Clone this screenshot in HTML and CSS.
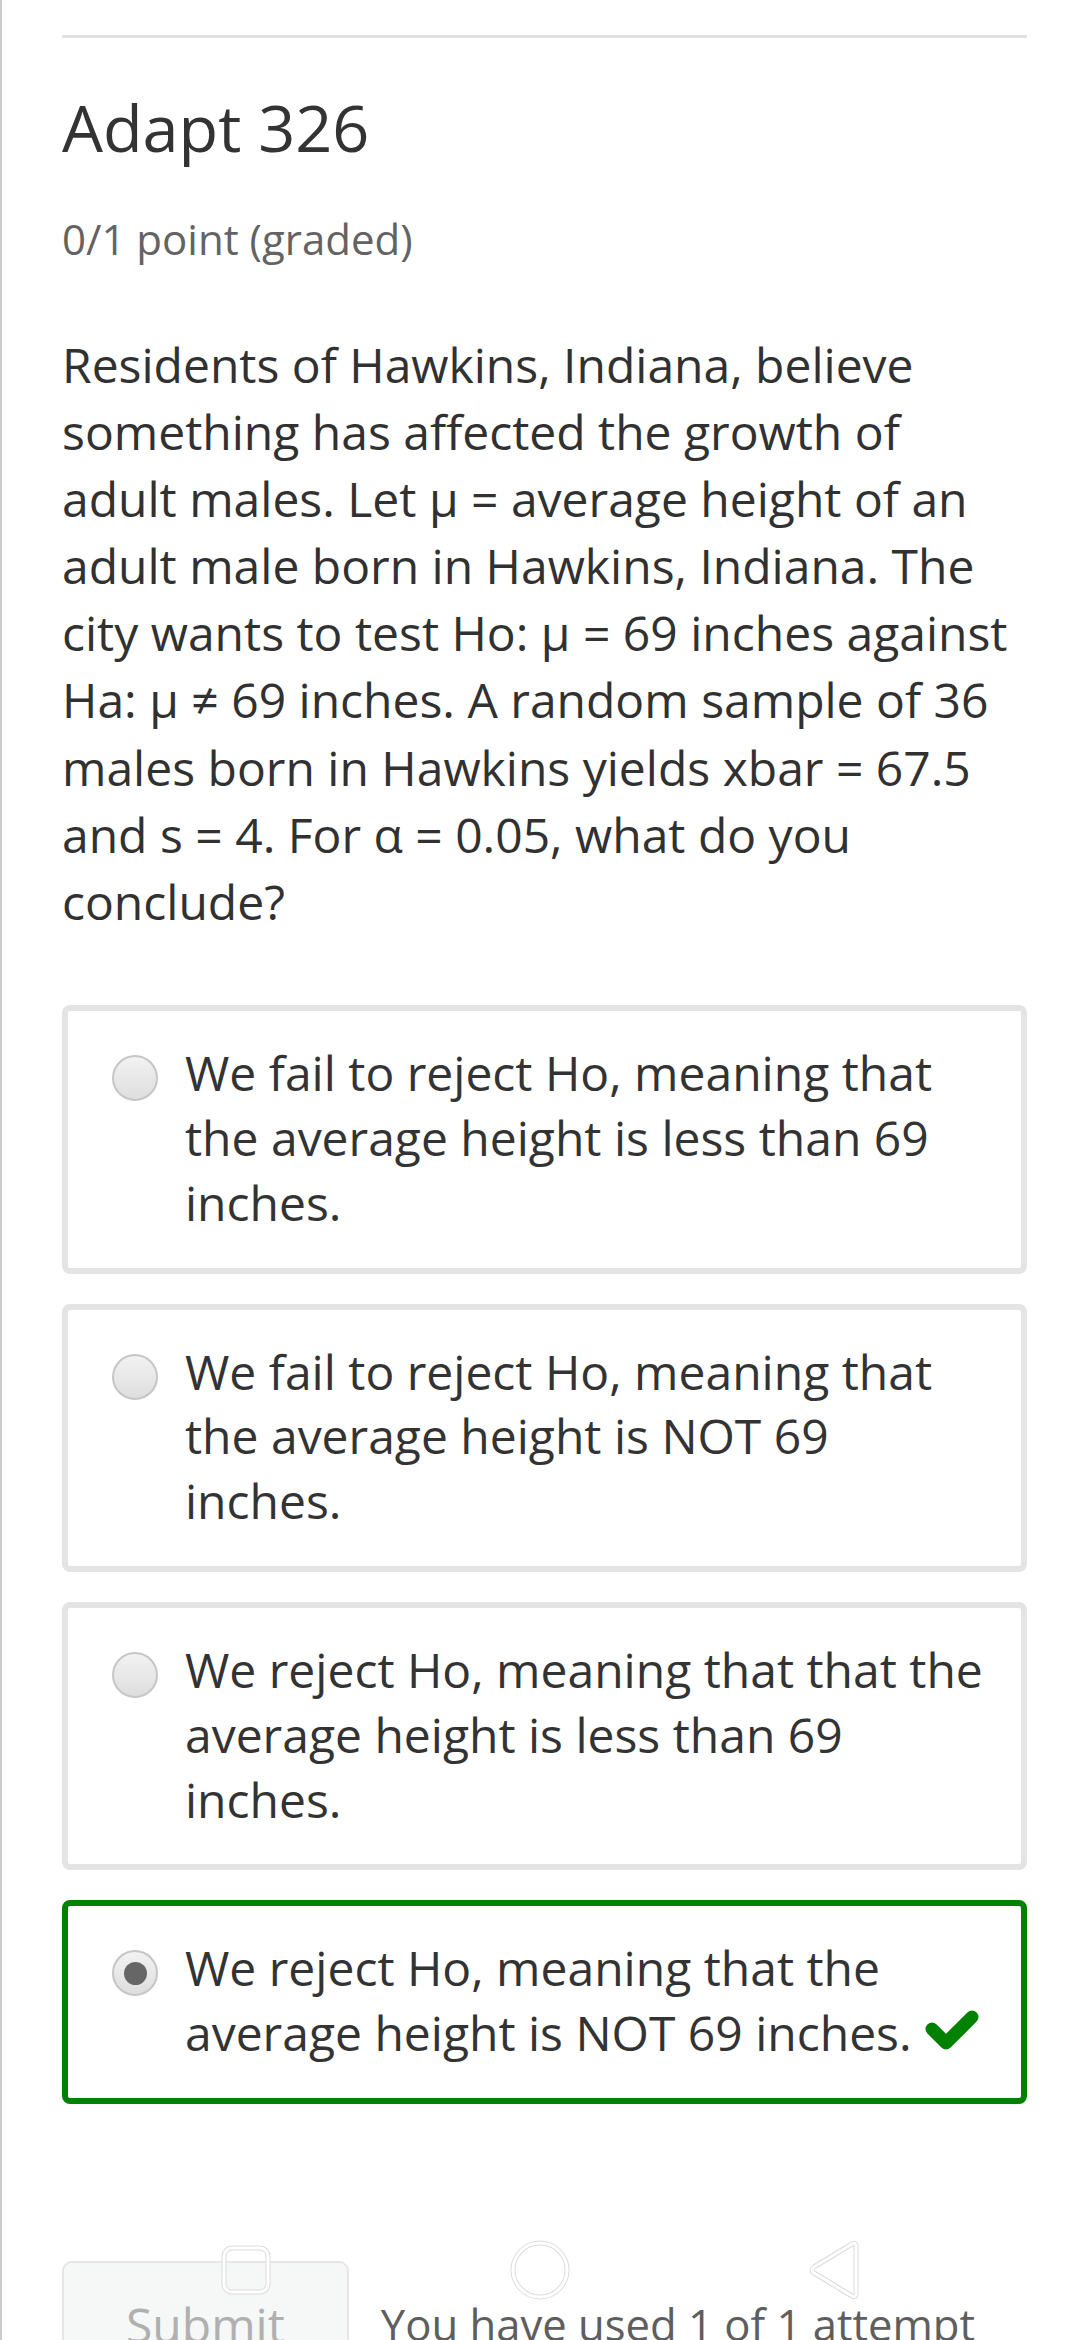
FILE: index.html
```html
<!DOCTYPE html>
<html lang="en">
<head>
<meta charset="utf-8">
<title>Adapt 326</title>
<link rel="stylesheet" href="styles.css">
</head>
<body>
<div class="page">
  <hr class="rule">
  <h2 class="title">Adapt 326</h2>
  <div class="points">0/1 point (graded)</div>
  <p class="question">Residents of Hawkins, Indiana, believe something has affected the growth of adult males. Let μ = average height of an adult male born in Hawkins, Indiana. The city wants to test Ho: μ = 69 inches against Ha: μ ≠ 69 inches. A random sample of 36 males born in Hawkins yields xbar = 67.5 and s = 4. For α = 0.05, what do you conclude?</p>
  <div class="choices">
    <label class="choice">
      <span class="radio"></span>
      <span class="choice-text">We fail to reject Ho, meaning that the average height is less than 69 inches.</span>
    </label>
    <label class="choice">
      <span class="radio"></span>
      <span class="choice-text">We fail to reject Ho, meaning that the average height is NOT 69 inches.</span>
    </label>
    <label class="choice">
      <span class="radio"></span>
      <span class="choice-text">We reject Ho, meaning that that the average height is less than 69 inches.</span>
    </label>
    <label class="choice correct">
      <span class="radio checked"></span>
      <span class="choice-text">We reject Ho, meaning that the average height is NOT 69 inches. <svg class="check" viewBox="0 0 56 46" width="56" height="46"><polyline points="8,20 22,34 48,8" fill="none" stroke="#008100" stroke-width="13" stroke-linecap="round" stroke-linejoin="round"/></svg></span>
    </label>
  </div>
  <div class="actions">
    <button class="submit" type="button">Submit</button>
    <span class="attempts">You have used 1 of 1 attempt</span>
  </div>
</div>
<div class="navbar">
  <svg class="nav-icon" width="60" height="60" viewBox="0 0 60 60">
    <rect x="8" y="8" width="44" height="44" rx="8" fill="none" stroke="#dcdcdc" stroke-width="5"/>
    <rect x="8" y="8" width="44" height="44" rx="8" fill="none" stroke="#ffffff" stroke-width="3"/>
  </svg>
  <svg class="nav-icon" width="66" height="66" viewBox="0 0 66 66">
    <circle cx="33" cy="33" r="27" fill="none" stroke="#dcdcdc" stroke-width="5"/>
    <circle cx="33" cy="33" r="27" fill="none" stroke="#ffffff" stroke-width="3"/>
  </svg>
  <svg class="nav-icon" width="60" height="62" viewBox="0 0 60 62">
    <path d="M50 7 L50 55 Q50 59 46 57 L8 34 Q4 31 8 28 L46 5 Q50 3 50 7 Z" fill="none" stroke="#dcdcdc" stroke-width="5" stroke-linejoin="round"/>
    <path d="M50 7 L50 55 Q50 59 46 57 L8 34 Q4 31 8 28 L46 5 Q50 3 50 7 Z" fill="none" stroke="#ffffff" stroke-width="3" stroke-linejoin="round"/>
  </svg>
</div>
</body>
</html>
```

FILE: styles.css
```css
html, body {
  margin: 0;
  padding: 0;
  background: #ffffff;
}

body {
  font-family: "Open Sans", "Noto Sans", sans-serif;
  color: #313131;
  overflow: hidden;
  height: 2340px;
}

.page {
  border-left: 2px solid #cccccc;
  min-height: 2340px;
  box-sizing: border-box;
  padding: 35px 53px 0 60px;
}

.rule {
  margin: 0;
  border: 0;
  height: 3px;
  background: #e1e1e1;
}

.title {
  margin: 51px 0 0;
  font-size: 64.8px;
  line-height: 1.2;
  font-weight: 400;
  color: #333333;
}

.points {
  margin-top: 43px;
  font-size: 42px;
  line-height: 1.4;
  color: #636363;
}

.question {
  margin: 62px 12px 0 0;
  font-size: 48px;
  line-height: 1.4;
  color: #313131;
}

.choices {
  margin-top: 70px;
  display: flex;
  flex-direction: column;
  gap: 30px;
}

.choice {
  display: flex;
  align-items: flex-start;
  gap: 27px;
  border: 6px solid #e4e4e4;
  border-radius: 8px;
  padding: 30px 34px 32px 44px;
  font-size: 48px;
  line-height: 1.35;
  color: #333333;
}

.choice.correct {
  border-color: #008100;
}

.radio {
  flex: none;
  width: 46px;
  height: 46px;
  margin-top: 14px;
  box-sizing: border-box;
  border-radius: 50%;
  border: 2px solid #c6c6c6;
  background: linear-gradient(#f2f2f2, #dedede);
  display: flex;
  align-items: center;
  justify-content: center;
}

.radio.checked::after {
  content: "";
  width: 23px;
  height: 23px;
  border-radius: 50%;
  background: #666666;
}

.choice-text {
  flex: 1;
}

.check {
  vertical-align: -4px;
}

.actions {
  margin-top: 157px;
  display: flex;
  align-items: flex-start;
  gap: 32px;
}

.submit {
  font-family: "Open Sans", "Noto Sans", sans-serif;
  font-size: 48px;
  line-height: 1.4;
  color: #b0b0b0;
  background: #f6f7f7;
  border: 2px solid #e6e6e6;
  border-radius: 10px;
  padding: 28px 62px;
}

.attempts {
  margin-top: 33px;
  font-size: 43.6px;
  line-height: 1.4;
  color: #5e5e5e;
}

.navbar {
  position: fixed;
  left: 0;
  right: 0;
  top: 2237px;
  height: 66px;
}

.nav-icon {
  position: absolute;
  top: 0;
}

.nav-icon:nth-child(1) { left: 216px; top: 3px; }
.nav-icon:nth-child(2) { left: 507px; }
.nav-icon:nth-child(3) { left: 806px; top: 2px; }
```
